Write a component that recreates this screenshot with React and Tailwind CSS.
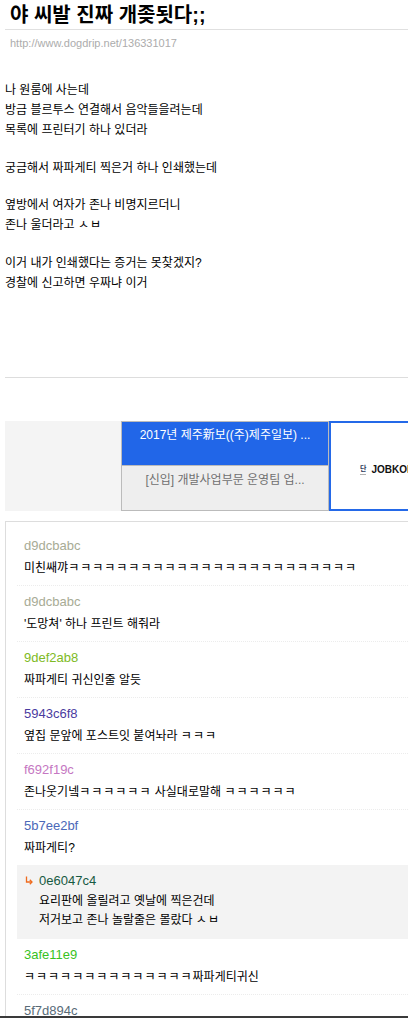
import React from "react";

const comments = [
  { id: "d9dcbabc", color: "text-[#a8ab95]", text: "미친쌔꺄" + "ㅋ".repeat(24) },
  { id: "d9dcbabc", color: "text-[#a8ab95]", text: "'도망쳐' 하나 프린트 해줘라" },
  { id: "9def2ab8", color: "text-[#7eba24]", text: "짜파게티 귀신인줄 알듯" },
  { id: "5943c6f8", color: "text-[#4a3ba0]", text: "옆집 문앞에 포스트잇 붙여놔라 ㅋㅋㅋ" },
  { id: "f692f19c", color: "text-[#c577c2]", text: "존나웃기넼ㅋㅋㅋㅋㅋㅋ 사실대로말해 ㅋㅋㅋㅋㅋㅋ" },
];

const body = [
  ["나 원룸에 사는데", "방금 블르투스 연결해서 음악들을려는데", "목록에 프린터기 하나 있더라"],
  ["궁금해서 짜파게티 찍은거 하나 인쇄했는데"],
  ["옆방에서 여자가 존나 비명지르더니", "존나 울더라고 ㅅㅂ"],
  ["이거 내가 인쇄했다는 증거는 못찾겠지?", "경찰에 신고하면 우짜냐 이거"],
];

function Jamo({ text }) {
  return text.split(/([ㄱ-ㅎ]+)/).map((part, i) =>
    /^[ㄱ-ㅎ]+$/.test(part) ? (
      <span key={i} className="tracking-[1px]">{part}</span>
    ) : (
      part
    )
  );
}

function Comment({ id, color, text, last }) {
  return (
    <div className={`pl-[7px] pt-[7px] pb-[7px] ${last ? "" : "border-b border-dotted border-[#ececec]"}`}>
      <div className={`text-[13px] leading-[18px] ${color}`}>{id}</div>
      <div className="mt-[3px] text-[12px] leading-[20px] text-black whitespace-nowrap">
        <Jamo text={text} />
      </div>
    </div>
  );
}

export default function App() {
  return (
    <div className="font-[family-name:'Liberation_Sans','Noto_Sans_CJK_KR',sans-serif] bg-white min-h-screen overflow-hidden">
      {/* title */}
      <h1 className="pl-[10px] pt-[5px] text-[20px] leading-[20px] font-bold text-black">
        야 씨발 진짜 개좆됫다;;
      </h1>
      <div className="mt-[4px] ml-[5px] border-t border-[#e0e0e0]" />
      <div className="mt-[6px] pl-[10px] text-[11px] leading-[14px] text-[#acacac]">
        http://www.dogdrip.net/136331017
      </div>

      {/* article */}
      <div className="mt-[30px] pl-[5px] text-[12px] leading-[20px] text-black">
        {body.map((para, i) => (
          <div key={i} className={i > 0 ? "mt-[17.5px]" : ""}>
            {para.map((line) => (
              <div key={line}>
                <Jamo text={line} />
              </div>
            ))}
          </div>
        ))}
      </div>

      <div className="mt-[84px] ml-[5px] border-t border-[#dddddd]" />

      {/* ad */}
      <div className="mt-[43px] ml-[5px] flex h-[90px] overflow-hidden">
        <div className="w-[116px] shrink-0 bg-[#f4f4f4]" />
        <div className="w-[208px] shrink-0 flex flex-col border border-[#bbbbbb] text-[12px] leading-[16px]">
          <div className="h-[43px] bg-[#2166e8] text-white text-center pt-[5px] whitespace-nowrap">
            2017년 제주新보((주)제주일보) ...
          </div>
          <div className="flex-1 border-t border-[#bbbbbb] bg-[#eeeeee] text-[#707070] text-center pt-[6px] whitespace-nowrap">
            [신입] 개발사업부문 운영팀 업...
          </div>
        </div>
        <div className="w-[208px] shrink-0 border-2 border-[#2469e8] bg-white flex items-center pl-[29px] pt-[8px]">
          <div className="flex flex-col items-center mr-[5px]">
            <span className="text-[7px] leading-[8px] font-bold text-[#2b3a5a]">단</span>
            <span className="mt-[1px] w-[6px] h-[1px] bg-[#b0b0b0]" />
          </div>
          <span className="text-[10px] leading-[12px] font-bold text-[#111] whitespace-nowrap">JOBKOREA</span>
        </div>
      </div>

      {/* comments */}
      <div className="mt-[10px] ml-[5px] border-t border-l border-[#dddddd] pt-[8px] pl-[11px]">
        {comments.map((c, i) => (
          <Comment key={i} {...c} />
        ))}
        <Comment id="5b7ee2bf" color="text-[#4b68b8]" text="짜파게티?" last />

        <div className="bg-[#f3f3f3] pl-[7px] pt-[8px] pb-[8px]">
          <div className="flex items-center">
            <svg width="8" height="9" viewBox="0 0 8 9" className="ml-[1px] mr-[6px]">
              <path d="M1.5 0.5V6H7" fill="none" stroke="#ef6a1c" strokeWidth="1.3" />
              <path d="M4.8 3.8L7 6L4.8 8.2" fill="none" stroke="#ef6a1c" strokeWidth="1.3" />
            </svg>
            <span className="text-[13px] leading-[16px] text-[#175a42]">0e6047c4</span>
          </div>
          <div className="mt-[3px] pl-[15px] text-[12px] leading-[19.5px] text-black">
            <div>요리판에 올릴려고 옛날에 찍은건데</div>
            <div>
              <Jamo text="저거보고 존나 놀랄줄은 몰랐다 ㅅㅂ" />
            </div>
          </div>
        </div>

        <Comment id="3afe11e9" color="text-[#38c21e]" text={"ㅋ".repeat(14) + "짜파게티귀신"} />
        <Comment id="5f7d894c" color="text-[#586b78]" text="" />
      </div>

      <div className="fixed bottom-0 left-0 right-0 h-[2px] bg-[#3a3a3a]" />
    </div>
  );
}
